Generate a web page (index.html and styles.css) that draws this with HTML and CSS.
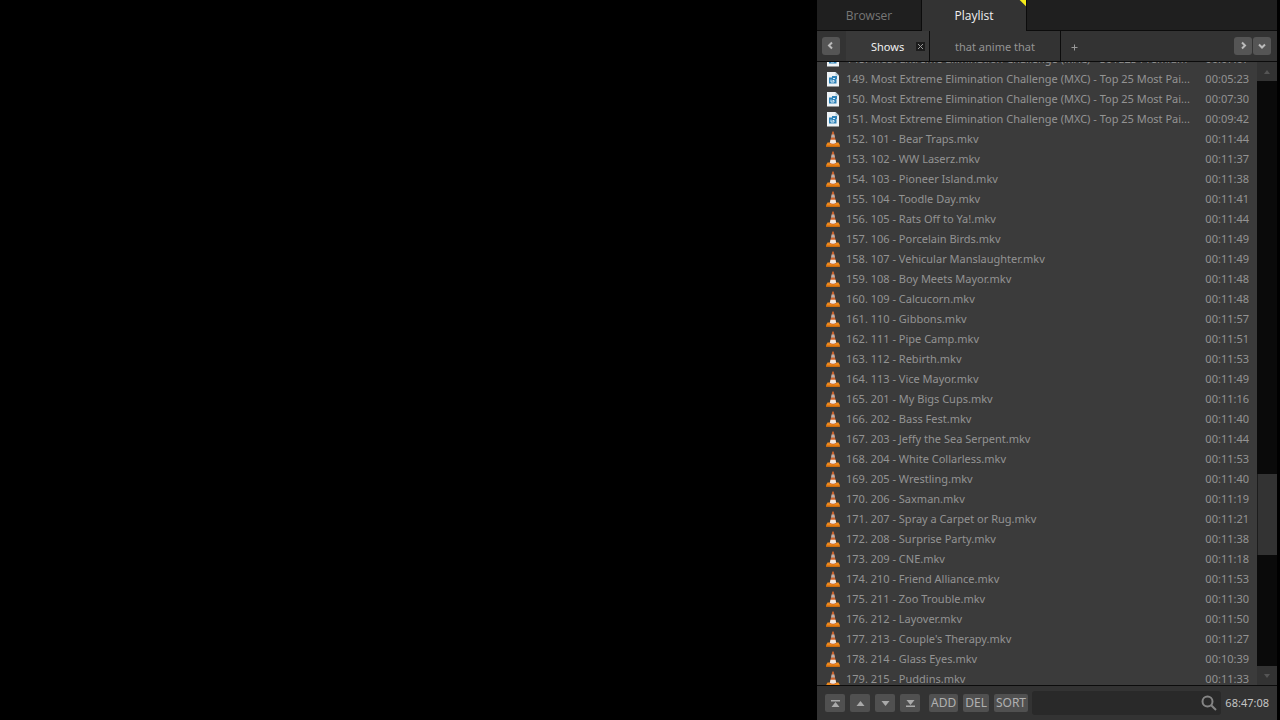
FILE: index.html
```html
<!DOCTYPE html>
<html lang="en">
<head>
<meta charset="utf-8">
<title>Playlist</title>
<link rel="stylesheet" href="styles.css">
</head>
<body>
<svg class="symbols" aria-hidden="true">
  <defs>
    <symbol id="cone" viewBox="0 0 14 16">
      <path d="M1.500 11.500h11L13.800 14v1.800H.2V14z" fill="#f08a1c"/>
      <path d="M.2 14.500h13.600v1.300H.2z" fill="#cf6a0c"/>
      <path d="M6.300.5h1.400L10.300 12.500q-3.300 2-6.600 0z" fill="#c9622c"/>
      <path d="M5.700 3.600h2.600l.7 2.800H5z" fill="#b9b0ae"/>
      <path d="M4.500 8.800h5l.7 2.900q-3.200 2-6.400 0z" fill="#f0e6e0"/>
    </symbol>
    <symbol id="file" viewBox="0 0 14 16">
      <path d="M1 1h8.500L13 4.500v11H1z" fill="#eef3f6"/>
      <path d="M9.500 1 13 4.500H9.500z" fill="#a9c3d2"/>
      <path d="M3 6.500h3V5h5v3h-.5v4.500H3z" fill="#2f83b8"/>
      <path d="M7 7.500h2M5 8.500v2.500h3V9.500H6.500" fill="none" stroke="#d9edf8" stroke-width="1"/>
    </symbol>
  </defs>
</svg>
<main class="player">
  <section class="video" aria-label="Video"></section>
  <aside class="panel">
    <nav class="tabs">
      <button class="tab">Browser</button>
      <button class="tab tab-active">Playlist</button>
    </nav>
    <div class="lists">
      <button class="square" aria-label="Previous"><svg viewBox="0 0 18 18"><path d="M10 5.500 7 8.500l3 3"/></svg></button>
      <div class="album album-active"><button class="album-name">Shows</button><button class="close" aria-label="Close"><svg viewBox="0 0 9 9"><path d="M2 2l5 5M7 2 2 7"/></svg></button></div>
      <div class="album album-wide"><button class="album-name">that anime that</button></div>
      <button class="plus" aria-label="New album"><svg viewBox="0 0 7 7"><path d="M3.500 .5v6M.5 3.500h6"/></svg></button>
      <div class="list-nav">
        <button class="square" aria-label="Next"><svg viewBox="0 0 18 18"><path d="M8 5.500l3 3-3 3"/></svg></button>
        <button class="square" aria-label="Menu"><svg viewBox="0 0 18 18"><path d="M6 7.500l3 3 3-3"/></svg></button>
      </div>
    </div>
    <div class="content">
      <ol class="items" id="items"></ol>
      <div class="scroll">
        <button class="scroll-end" aria-label="Up"><svg viewBox="0 0 6 4"><path d="M3 0l3 4H0z"/></svg></button>
        <div class="track"><div class="thumb"></div></div>
        <button class="scroll-end" aria-label="Down"><svg viewBox="0 0 6 4"><path d="M0 0h6L3 4z"/></svg></button>
      </div>
    </div>
    <footer class="bar">
      <div class="moves">
        <button class="key" aria-label="Top"><svg viewBox="0 0 20 18"><path d="M6 6h9v1.500H6zM10.500 8l4 5h-8z"/></svg></button>
        <button class="key" aria-label="Up"><svg viewBox="0 0 20 18"><path d="M10.500 7l4 5h-8z"/></svg></button>
        <button class="key" aria-label="Down"><svg viewBox="0 0 20 18"><path d="M6.500 7h8l-4 5z"/></svg></button>
        <button class="key" aria-label="Bottom"><svg viewBox="0 0 20 18"><path d="M6.500 6h8l-4 5zM6 11.500h9V13H6z"/></svg></button>
      </div>
      <div class="actions">
        <button class="action">ADD</button>
        <button class="action">DEL</button>
        <button class="action">SORT</button>
      </div>
      <label class="search"><input type="search" aria-label="Search playlist"><svg viewBox="0 0 16 16"><circle cx="6.500" cy="6.500" r="5"/><path d="M10.200 10.200 15 15"/></svg></label>
      <span class="total">68:47:08</span>
    </footer>
  </aside>
</main>
<script src="playlist.js"></script>
</body>
</html>
```
FILE: styles.css
```css
* { box-sizing: border-box; }
body {
  margin: 0;
  background: #000;
  color: #939393;
  font: 11px/20px "Noto Sans", sans-serif;
}
button, input { font: inherit; color: inherit; border: 0; padding: 0; margin: 0; }
button { background: none; }
svg { display: block; }
.symbols { position: absolute; width: 0; height: 0; }
.player { display: flex; height: 100vh; padding-right: 3px; }
.video { flex: 1; }
.panel { display: flex; flex-direction: column; width: 460px; background: #333; }
.tabs { display: flex; height: 31px; background: #1f1f1f; border-bottom: 1px solid #0c0c0c; font-family: "Open Sans", sans-serif; font-size: 12px; }
.tab { width: 105px; padding-top: 1px; border-right: 1px solid #0c0c0c; color: #777; }
.tab-active {
  height: 31px;
  color: #f0f0f0;
  background: linear-gradient(225deg, #f4ec1a 4px, #333 5px);
}
.lists { display: flex; align-items: center; height: 31px; padding-left: 5px; border-bottom: 1px solid #0c0c0c; }
.square { width: 18px; height: 18px; border-radius: 3px; background: #555; }
.square path, .close path, .plus path { fill: none; stroke: #bbb; stroke-width: 2; }
.album { display: flex; align-items: center; height: 30px; padding-top: 1px; border-right: 1px solid #0c0c0c; }
.album-active { width: 84px; margin-left: 6px; padding-left: 25px; padding-right: 4px; justify-content: space-between; background: #393939; color: #f0f0f0; }
.album-wide { width: 131px; justify-content: center; }
.close { width: 9px; height: 9px; background: #1c1c1c; }
.close path, .plus path { stroke: #999; stroke-width: 1; }
.plus { width: 7px; margin: 2px 0 0 10px; }
.list-nav { display: flex; gap: 1px; margin-left: auto; padding-right: 6px; }
.content { display: flex; flex: 1; min-height: 0; }
.items { flex: 1; min-width: 0; margin: 0; padding: 0; list-style: none; overflow: hidden; background: #3b3b3b; }
.item { display: flex; height: 20px; padding: 0 8px 0 9px; }
.icon { flex: none; width: 14px; height: 16px; margin: 2px 6px 0 0; }
.name { flex: 1; min-width: 0; overflow: hidden; white-space: nowrap; text-overflow: ellipsis; }
.time { flex: none; text-align: right; }
.scroll { display: flex; flex-direction: column; width: 20px; background: #0a0a0a; }
.scroll-end { display: grid; place-items: center; height: 19px; background: #333; }
.scroll-end svg { width: 6px; height: 4px; fill: #555; }
.track { display: flex; flex: 1; flex-direction: column; padding-top: 393px; }
.thumb { height: 81px; background: #333; border-left: 1px solid #1c1c1c; }
.bar { display: flex; align-items: center; height: 35px; padding: 0 8px; border-top: 1px solid #0c0c0c; }
.moves { display: flex; gap: 5px; }
.key { width: 20px; height: 18px; border-radius: 2px; background: #505050; }
.key svg { fill: #aaa; }
.actions { display: flex; gap: 5px; margin: 0 4px 0 9px; }
.action { height: 18px; padding: 0 2px; border-radius: 2px; background: #505050; color: #b0b0b0; font-size: 12px; line-height: 18px; }
.search { display: flex; flex: 1; align-items: center; height: 24px; padding-right: 4px; border-radius: 3px; background: #292929; }
.search input { flex: 1; min-width: 0; background: none; outline: 0; appearance: none; }
.search svg { width: 16px; height: 16px; fill: none; stroke: #858585; stroke-width: 2; }
.total { padding-left: 4px; color: #c4c4c4; }
```
FILE: playlist.js
```js
const challenge = "Most Extreme Elimination Challenge (MXC) - Top 25 Most Pai...";
const entries = [
  ["Most Extreme Elimination Challenge (MXC) - S01E25 Premium", "00:07:07"],
  [challenge, "00:05:23"], [challenge, "00:07:30"], [challenge, "00:09:42"],
  ["101 - Bear Traps.mkv", "00:11:44"], ["102 - WW Laserz.mkv", "00:11:37"],
  ["103 - Pioneer Island.mkv", "00:11:38"], ["104 - Toodle Day.mkv", "00:11:41"],
  ["105 - Rats Off to Ya!.mkv", "00:11:44"], ["106 - Porcelain Birds.mkv", "00:11:49"],
  ["107 - Vehicular Manslaughter.mkv", "00:11:49"], ["108 - Boy Meets Mayor.mkv", "00:11:48"],
  ["109 - Calcucorn.mkv", "00:11:48"], ["110 - Gibbons.mkv", "00:11:57"],
  ["111 - Pipe Camp.mkv", "00:11:51"], ["112 - Rebirth.mkv", "00:11:53"],
  ["113 - Vice Mayor.mkv", "00:11:49"], ["201 - My Bigs Cups.mkv", "00:11:16"],
  ["202 - Bass Fest.mkv", "00:11:40"], ["203 - Jeffy the Sea Serpent.mkv", "00:11:44"],
  ["204 - White Collarless.mkv", "00:11:53"], ["205 - Wrestling.mkv", "00:11:40"],
  ["206 - Saxman.mkv", "00:11:19"], ["207 - Spray a Carpet or Rug.mkv", "00:11:21"],
  ["208 - Surprise Party.mkv", "00:11:38"], ["209 - CNE.mkv", "00:11:18"],
  ["210 - Friend Alliance.mkv", "00:11:53"], ["211 - Zoo Trouble.mkv", "00:11:30"],
  ["212 - Layover.mkv", "00:11:50"], ["213 - Couple's Therapy.mkv", "00:11:27"],
  ["214 - Glass Eyes.mkv", "00:10:39"], ["215 - Puddins.mkv", "00:11:33"]
];
const list = document.getElementById("items");
list.innerHTML = entries.map(([name, time], i) => `
  <li class="item">
    <svg class="icon"><use href="#${i < 4 ? "file" : "cone"}"/></svg>
    <span class="name">${148 + i}. ${name}</span>
    <time class="time">${time}</time>
  </li>`).join("");
list.scrollTop = 13;
```
